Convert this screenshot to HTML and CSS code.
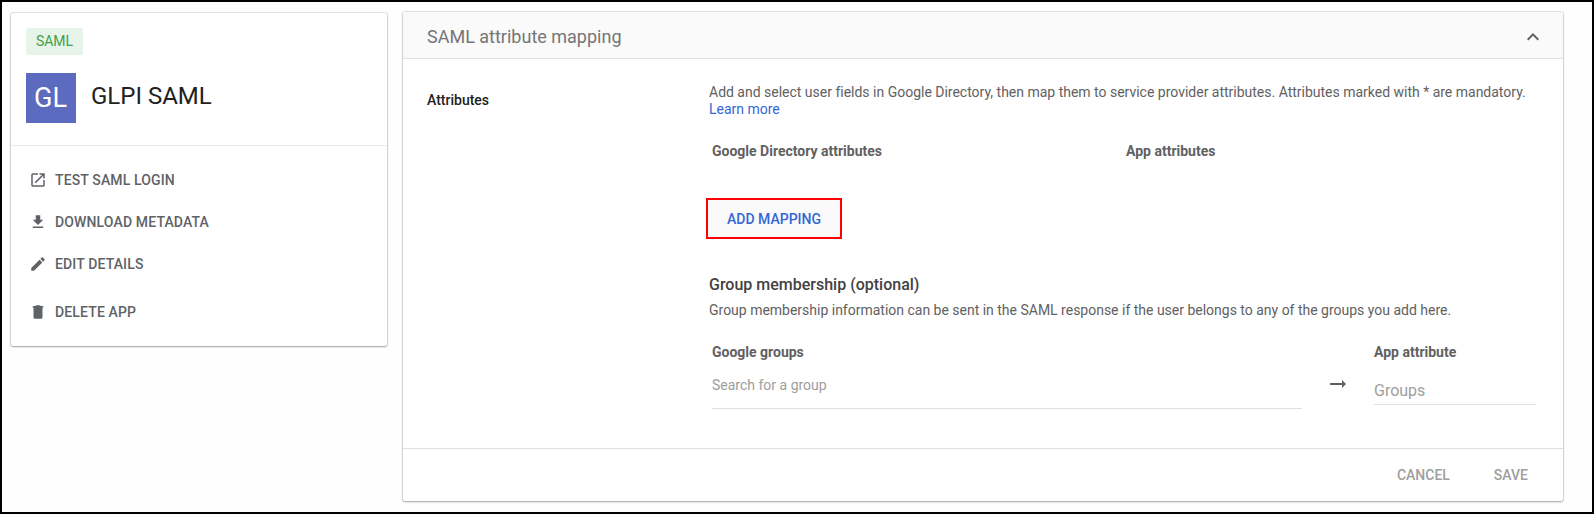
FILE: index.html
```html
<!DOCTYPE html>
<html lang="en">
<head>
<meta charset="utf-8">
<title>GLPI SAML</title>
<link rel="stylesheet" href="styles.css">
</head>
<body>
<div class="page">
  <aside class="card app-card">
    <header class="app-head">
      <span class="badge">SAML</span>
      <div class="app-id">
        <div class="app-logo">GL</div>
        <h1 class="app-name">GLPI SAML</h1>
      </div>
    </header>
    <nav class="menu">
      <a class="menu-item"><svg class="icon" viewBox="0 0 24 24"><path d="M19 19H5V5h7V3H5a2 2 0 0 0-2 2v14a2 2 0 0 0 2 2h14c1.1 0 2-.9 2-2v-7h-2v7zM14 3v2h3.59l-9.83 9.83 1.41 1.41L19 6.41V10h2V3h-7z"/></svg>TEST SAML LOGIN</a>
      <a class="menu-item"><svg class="icon" viewBox="0 0 24 24"><path d="M19 9h-4V3H9v6H5l7 7 7-7zM5 18v2h14v-2H5z"/></svg>DOWNLOAD METADATA</a>
      <a class="menu-item"><svg class="icon" viewBox="0 0 24 24"><path d="M3 17.25V21h3.75L17.81 9.94l-3.75-3.75L3 17.25zM20.71 7.04a1 1 0 0 0 0-1.41l-2.34-2.34a1 1 0 0 0-1.41 0l-1.83 1.83 3.75 3.75 1.83-1.83z"/></svg>EDIT DETAILS</a>
      <a class="menu-item menu-item-last"><svg class="icon" viewBox="0 0 24 24"><path d="M6 19c0 1.1.9 2 2 2h8c1.1 0 2-.9 2-2V6H6v13zM19 4h-3.5l-1-1h-5l-1 1H5v2h14V4z"/></svg>DELETE APP</a>
    </nav>
  </aside>

  <main class="card panel">
    <header class="panel-head">
      <h2 class="panel-title">SAML attribute mapping</h2>
      <svg class="icon-lg chevron" viewBox="0 0 24 24"><path d="M12 8l-6 6 1.41 1.41L12 10.83l4.59 4.58L18 14z"/></svg>
    </header>
    <div class="panel-body">
      <h3 class="section-label">Attributes</h3>
      <div class="section">
        <p class="intro">Add and select user fields in Google Directory, then map them to service provider attributes. Attributes marked with * are mandatory. <a class="link">Learn more</a></p>
        <div class="columns">
          <span>Google Directory attributes</span>
          <span>App attributes</span>
        </div>
        <div class="highlight"><button class="add-button">ADD MAPPING</button></div>
        <h4 class="group-title">Group membership (optional)</h4>
        <p class="group-text">Group membership information can be sent in the SAML response if the user belongs to any of the groups you add here.</p>
        <div class="group-row">
          <div class="field field-search">
            <span class="field-label">Google groups</span>
            <span class="search-input">Search for a group</span>
          </div>
          <svg class="icon-lg arrow" viewBox="0 0 24 24"><path d="M16.01 11H4v2h12.01v3L20 12l-3.99-4z"/></svg>
          <div class="field field-app">
            <span class="field-label">App attribute</span>
            <span class="app-input">Groups</span>
          </div>
        </div>
      </div>
    </div>
    <footer class="panel-foot">
      <button class="foot-button">CANCEL</button>
      <button class="foot-button">SAVE</button>
    </footer>
  </main>
</div>
</body>
</html>
```
FILE: styles.css
```css
* { box-sizing: border-box; }

body {
  margin: 0;
  font-family: Roboto, sans-serif;
  font-size: 14px;
  line-height: 20px;
  color: #616161;
  background: #fff;
}

h1, h2, h3, h4, p { margin: 0; font-weight: 400; }

button {
  padding: 0;
  border: 0;
  background: none;
  font: 500 14px/20px Roboto, sans-serif;
}

.page {
  display: flex;
  align-items: flex-start;
  gap: 16px;
  width: 1594px;
  height: 514px;
  padding: 10px 0 0 9px;
  border: 2px solid #000;
  background: #fefefe;
}

.card {
  background: #fff;
  border-radius: 2px;
  box-shadow: 0 0 2px rgba(0, 0, 0, .18), 0 0 0 1px rgba(0, 0, 0, .06), 0 1px 2px rgba(0, 0, 0, .28);
}

.app-card { width: 376px; height: 333px; margin-top: 1px; }
.app-head { height: 133px; padding: 15px; border-bottom: 1px solid #ebebeb; }

.badge {
  display: block;
  width: 57px;
  height: 27px;
  border-radius: 2px;
  background: #e6f4ea;
  color: #43a047;
  line-height: 27px;
  text-align: center;
}

.app-id { display: flex; gap: 15px; margin-top: 18px; }

.app-logo {
  width: 50px;
  height: 50px;
  padding-right: 1px;
  background: #5c6bc0;
  color: #fff;
  font-size: 27px;
  line-height: 51px;
  text-align: center;
}

.app-name { font-size: 24px; line-height: 46px; color: #212121; }

.menu { padding: 24px 18px; }

.menu-item {
  display: flex;
  align-items: center;
  gap: 8px;
  height: 20px;
  margin-bottom: 22px;
  font-weight: 500;
  letter-spacing: .14px;
  color: #5f6368;
}

.menu-item-last { margin-top: 28px; }

.icon { width: 18px; height: 18px; fill: #5f6368; }
.icon-lg { width: 24px; height: 24px; fill: #616161; }

.panel { width: 1160px; height: 489px; }

.panel-head {
  display: flex;
  align-items: center;
  justify-content: space-between;
  height: 47px;
  padding: 3px 18px 0 24px;
  border-bottom: 1px solid #e0e0e0;
  border-radius: 2px 2px 0 0;
  background: #fafafa;
}

.panel-title { font-size: 18px; line-height: 24px; color: #757575; }
.chevron { margin-top: 1px; }

.panel-body { display: flex; height: 389px; padding-left: 24px; }

.section-label {
  width: 282px;
  padding-top: 31px;
  font-size: 14px;
  font-weight: 500;
  color: #212121;
}

.section { width: 830px; padding-top: 25px; }
.intro { line-height: 17px; letter-spacing: -.007px; }
.link { color: #3367d6; }

.columns {
  display: grid;
  grid-template-columns: 414px auto;
  margin-top: 23px;
  padding-left: 3px;
  font-weight: 700;
}

.highlight {
  width: 136px;
  height: 41px;
  margin: 37px 0 0 -3px;
  padding: 1px;
  border: 2px solid #f00;
}

.add-button {
  width: 130px;
  height: 35px;
  border-radius: 2px;
  background: #fafafa;
  box-shadow: 0 0 1px rgba(0, 0, 0, .3);
  color: #3367d6;
}

.group-title { margin-top: 36px; font-size: 16px; font-weight: 500; color: #424242; }
.group-text { margin-top: 5px; letter-spacing: -.007px; }

.group-row { display: flex; margin: 22px 0 0 3px; }
.field { display: flex; flex-direction: column; }
.field-label { font-weight: 700; }
.field-search { width: 590px; }
.field-app { width: 162px; margin-left: 24px; }
.arrow { margin: 30px 0 0 24px; }

.search-input {
  height: 47px;
  padding-top: 13px;
  border-bottom: 1px solid #e0e0e0;
  color: #9e9e9e;
}

.app-input {
  height: 43px;
  padding-top: 19px;
  border-bottom: 1px solid #e0e0e0;
  font-size: 16px;
  color: #9e9e9e;
}

.panel-foot {
  display: flex;
  justify-content: flex-end;
  gap: 44px;
  height: 53px;
  padding: 16px 35px 0;
  border-top: 1px solid #e0e0e0;
}

.foot-button { height: 20px; color: #9e9e9e; }
```
